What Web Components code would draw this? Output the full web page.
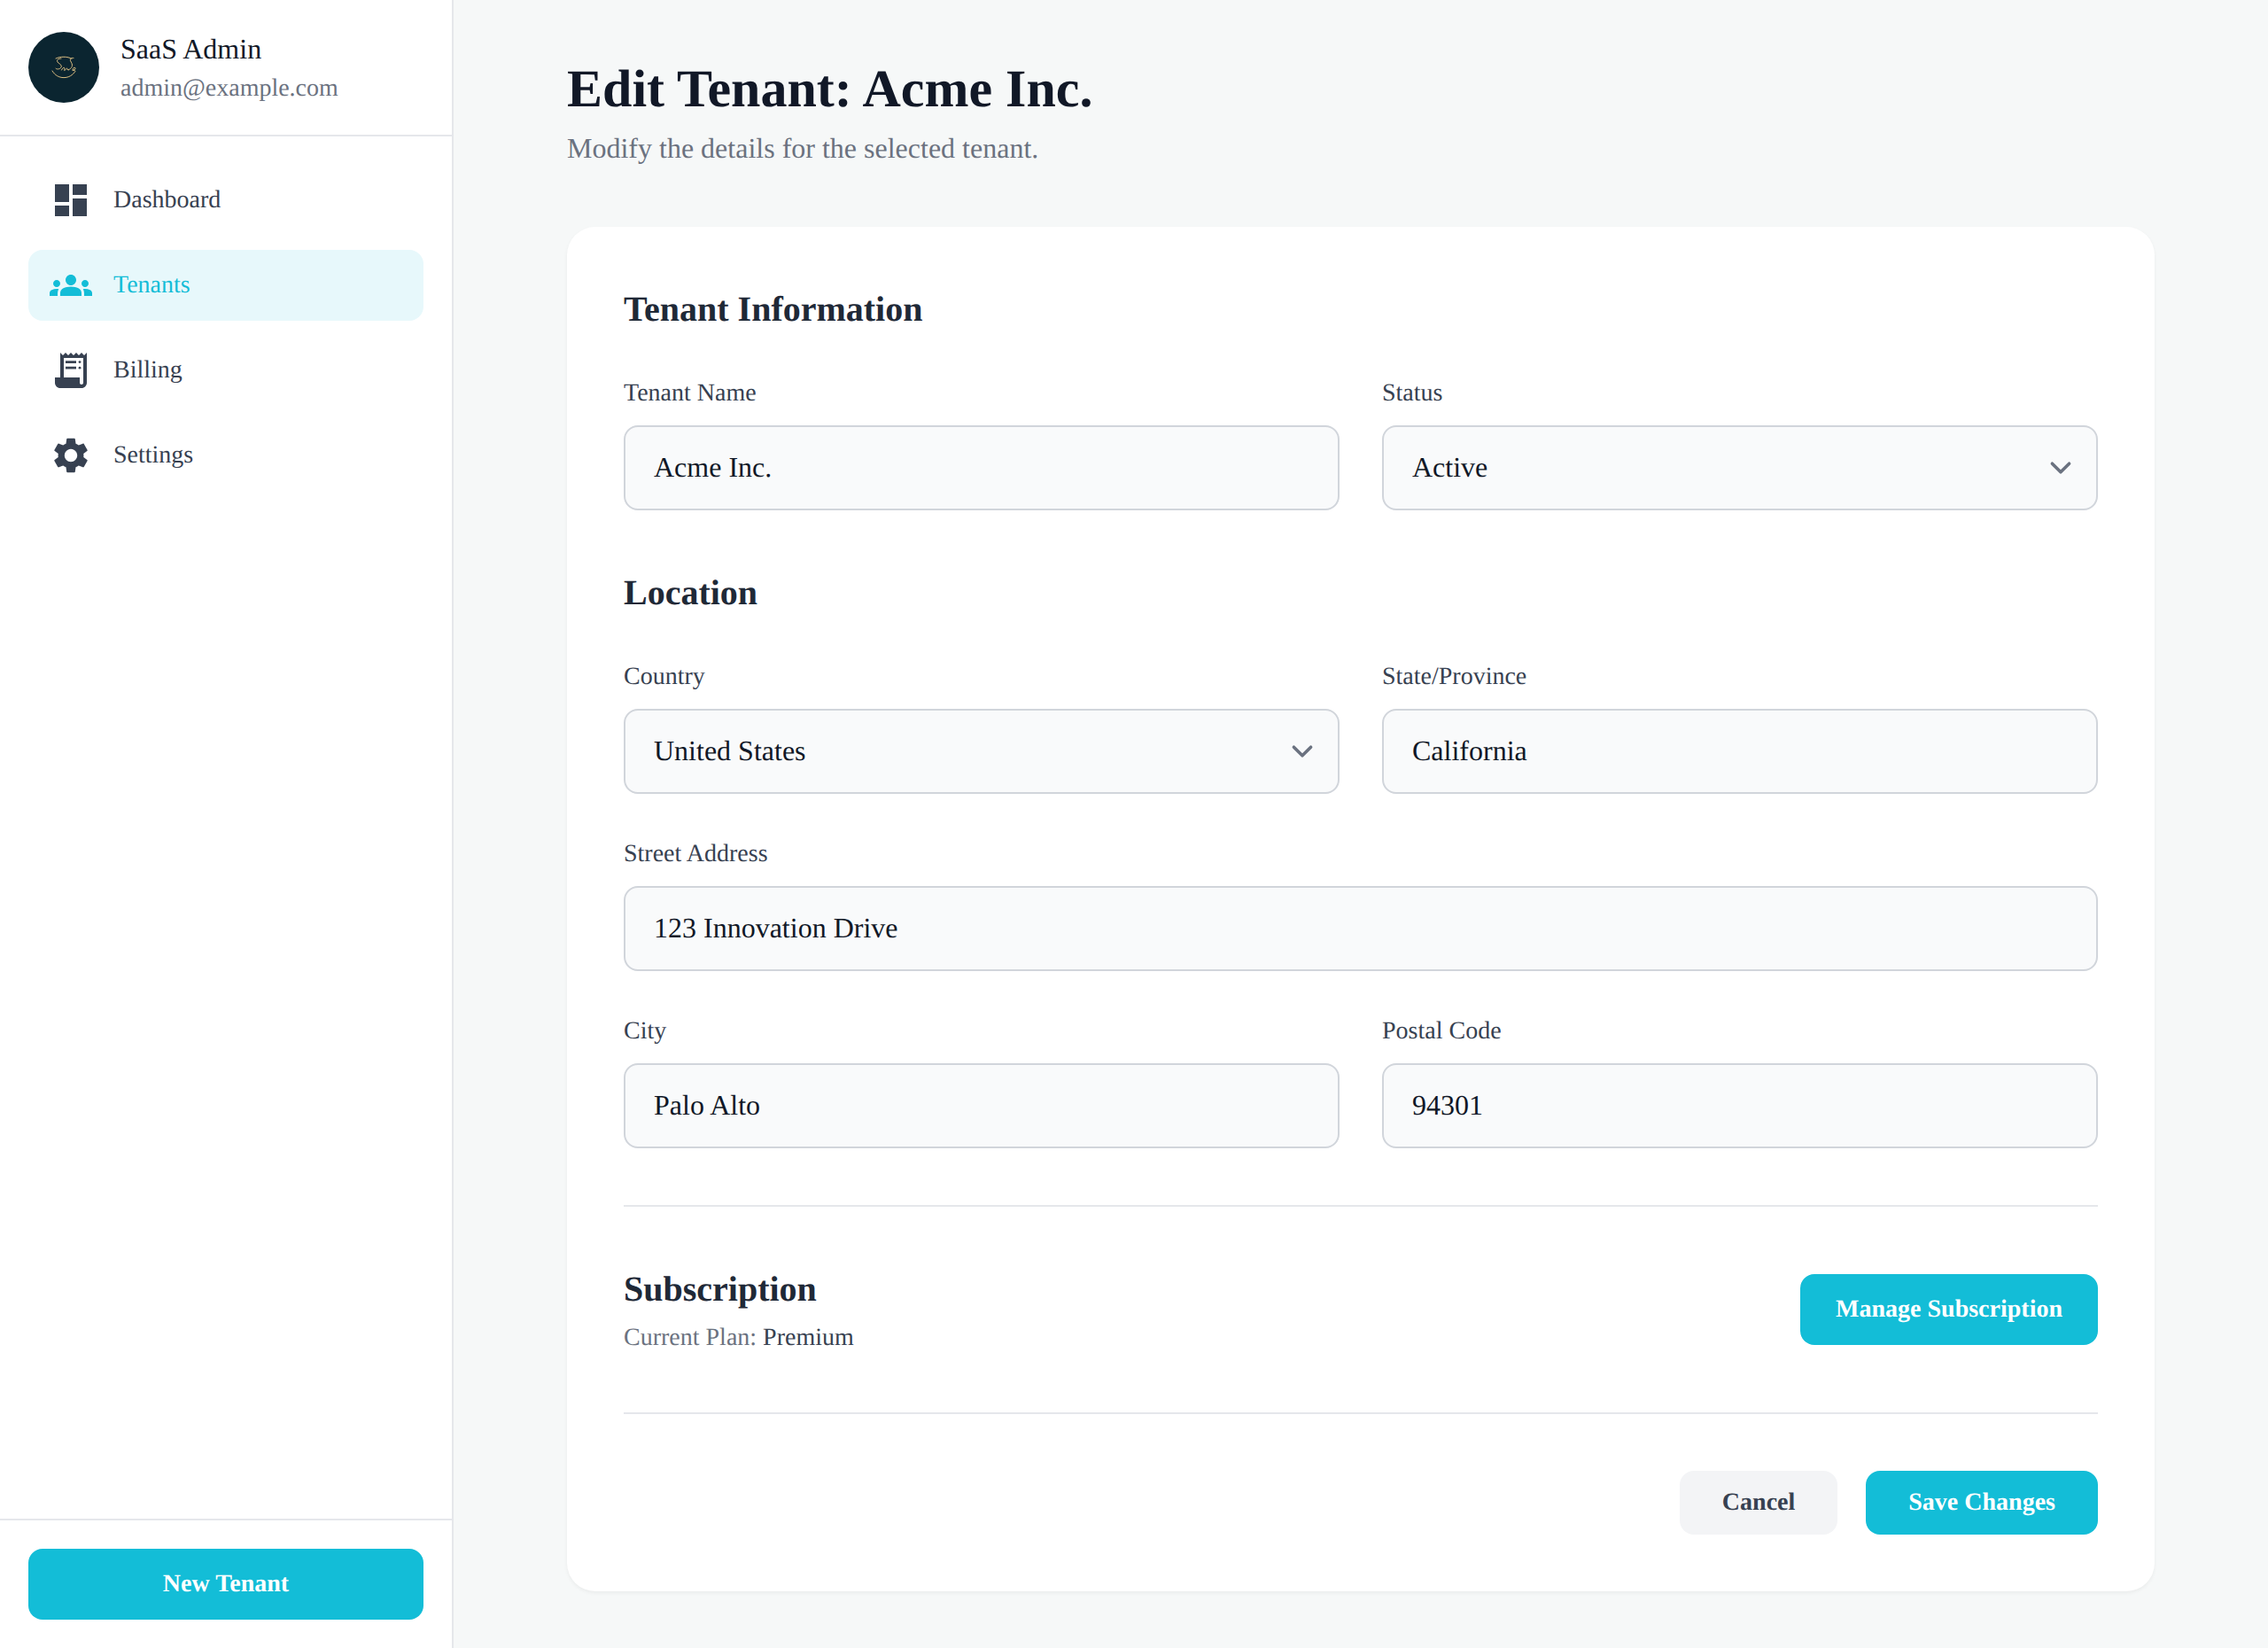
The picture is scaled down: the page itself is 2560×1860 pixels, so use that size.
<!DOCTYPE html>
<html lang="en"><head><meta charset="utf-8"><title>Edit Tenant</title>
<style>
html,body{margin:0;padding:0;height:100%}
body{font-family:"Liberation Serif",serif;background:#f6f8f8;color:#111827;text-rendering:geometricPrecision}
</style></head><body>
<app-shell>
  <app-sidebar slot="side">
    <brand-header name="SaaS Admin" email="admin@example.com"></brand-header>
    <nav-item icon="dashboard">Dashboard</nav-item>
    <nav-item icon="groups" active>Tenants</nav-item>
    <nav-item icon="receipt">Billing</nav-item>
    <nav-item icon="settings">Settings</nav-item>
    <ui-button slot="foot" variant="primary" block>New Tenant</ui-button>
  </app-sidebar>
  <page-head title="Edit Tenant: Acme Inc." sub="Modify the details for the selected tenant."></page-head>
  <form-card>
    <section-title>Tenant Information</section-title>
    <field-grid>
      <form-field label="Tenant Name">Acme Inc.</form-field>
      <form-field label="Status" select>Active</form-field>
    </field-grid>
    <section-title style="margin-top:64px">Location</section-title>
    <field-grid>
      <form-field label="Country" select>United States</form-field>
      <form-field label="State/Province">California</form-field>
      <form-field label="Street Address" wide>123 Innovation Drive</form-field>
      <form-field label="City">Palo Alto</form-field>
      <form-field label="Postal Code">94301</form-field>
    </field-grid>
    <subscription-row plan="Premium"></subscription-row>
    <form-actions>
      <ui-button variant="secondary" short>Cancel</ui-button>
      <ui-button variant="primary" short>Save Changes</ui-button>
    </form-actions>
  </form-card>
</app-shell>
<script>
const ICONS={
dashboard:'<path d="M3 13h8V3H3v10zm0 8h8v-6H3v6zm10 0h8V11h-8v10zm0-18v6h8V3h-8z"/>',
groups:'<path d="M12 12.75c1.63 0 3.07.39 4.24.9 1.08.48 1.76 1.56 1.76 2.73V18H6v-1.61c0-1.18.68-2.26 1.76-2.74 1.17-.52 2.61-.9 4.24-.9zM4 13c1.1 0 2-.9 2-2s-.9-2-2-2-2 .9-2 2 .9 2 2 2zm1.13 1.1c-.37-.06-.74-.1-1.13-.1-.99 0-1.93.21-2.78.58C.48 14.9 0 15.62 0 16.43V18h4.5v-1.61c0-.83.23-1.61.63-2.29zM20 13c1.1 0 2-.9 2-2s-.9-2-2-2-2 .9-2 2 .9 2 2 2zm4 3.43c0-.81-.48-1.53-1.22-1.85-.85-.37-1.79-.58-2.78-.58-.39 0-.76.04-1.13.1.4.68.63 1.46.63 2.29V18H24v-1.57zM12 6c1.66 0 3 1.34 3 3s-1.34 3-3 3-3-1.34-3-3 1.34-3 3-3z"/>',
receipt:'<path d="M19.5 3.5L18 2l-1.5 1.5L15 2l-1.5 1.5L12 2l-1.5 1.5L9 2 7.5 3.5 6 2v14H3v3c0 1.66 1.34 3 3 3h12c1.66 0 3-1.34 3-3V2l-1.5 1.5zM19 19c0 .55-.45 1-1 1s-1-.45-1-1v-3H8V5h11v14z"/><path d="M9 6.600h6v1.400H9zM9 9.900h6v1.400H9z"/><circle cx="17" cy="7.300" r=".7"/><circle cx="17" cy="10.600" r=".7"/>',
settings:'<path d="M19.14 12.94c.04-.3.06-.61.06-.94 0-.32-.02-.64-.07-.94l2.03-1.58c.18-.14.23-.41.12-.61l-1.92-3.32c-.12-.22-.37-.29-.59-.22l-2.39.96c-.5-.38-1.03-.7-1.62-.94l-.36-2.54c-.04-.24-.24-.41-.48-.41h-3.84c-.24 0-.43.17-.47.41l-.36 2.54c-.59.24-1.13.57-1.62.94l-2.39-.96c-.22-.08-.47 0-.59.22L2.74 8.87c-.12.21-.08.47.12.61l2.03 1.58c-.05.3-.09.63-.09.94s.02.64.07.94l-2.03 1.58c-.18.14-.23.41-.12.61l1.92 3.32c.12.22.37.29.59.22l2.39-.96c.5.38 1.03.7 1.62.94l.36 2.54c.05.24.24.41.48.41h3.84c.24 0 .44-.17.47-.41l.36-2.54c.59-.24 1.13-.56 1.62-.94l2.39.96c.22.08.47 0 .59-.22l1.92-3.32c.12-.22.07-.47-.12-.61l-2.01-1.58zM12 15.6c-1.98 0-3.6-1.62-3.6-3.6s1.62-3.6 3.6-3.6 3.6 1.62 3.6 3.6-1.62 3.6-3.6 3.6z"/>'
};
function def(name,html,extra){
  class C extends HTMLElement{
    constructor(){super();this.attachShadow({mode:'open'});if(typeof html!=='function')this.shadowRoot.innerHTML=html;}
    connectedCallback(){
      const r=this.shadowRoot;
      if(typeof html==='function')r.innerHTML=html(this);
      if(extra)extra(this,r);
    }
  }
  customElements.define(name,C);
}
def('app-shell',`<style>
:host{display:flex;min-height:1860px;box-sizing:border-box}
aside{flex:0 0 512px;display:flex}
main{flex:1;min-width:0;padding:64px 128px;box-sizing:border-box}
</style><aside><slot name="side"></slot></aside><main><slot></slot></main>`);
def('app-sidebar',`<style>
:host{display:flex;flex-direction:column;width:512px;box-sizing:border-box;background:#fff;border-right:2px solid #e5e7eb}
nav{flex:1;display:flex;flex-direction:column;gap:16px;padding:32px}
footer{border-top:2px solid #e5e7eb;padding:32px;display:flex;flex-direction:column}
</style><slot name="head"></slot><nav><slot></slot></nav><footer><slot name="foot"></slot></footer>`,(el)=>{
  el.querySelector('brand-header').slot='head';
});
def('brand-header',(h)=>`<style>
:host{display:flex;align-items:center;gap:24px;padding:32px;border-bottom:2px solid #e5e7eb}
svg{width:80px;height:80px;flex:none;display:block}
.t{display:flex;flex-direction:column}
.n{font-size:32px;line-height:46px;padding-bottom:2px;color:#111827}
.e{font-size:28px;line-height:40px;color:#6b7280}
</style>
<svg viewBox="0 0 80 80" aria-hidden="true"><circle cx="40" cy="40" r="40" fill="#0b2530"/>
<g fill="none" stroke="#dcbe82" stroke-width="1" stroke-linecap="round">
<path d="M31 30c5-2.400 13-2.600 18 .3"/><path d="M27 44c3 5 7.500 7.600 13 7.600s10-2.600 13-7.200"/>
<path d="M37 30c-3 0-5.500 1.600-4 4 1.300 2 4.500 2.600 4.300 5-.2 2.600-4.800 4-6.300 2.300"/>
<path d="M37.500 43c1-2.400 3-3.600 3.400-2 .3 1.300-1 2.400-.2 2.600 1 .2 1.600-2.400 2.800-2.400 1 0 .4 2.400 1.800 2"/>
<path d="M51 29.500c-2.600-.8-4.300 1-3.400 3.200.8 2 2.400 3.600 1.700 6-.7 2.400-3.200 4.600-5 3.700"/>
<path d="M50 43.500c1.300-.3 3.400-1.400 3-2.700-.4-1.200-3-.2-3 1.700 0 1.200 1.500 1.200 2.700.5"/>
</g></svg>
<div class="t"><span class="n">${h.getAttribute('name')||''}</span><span class="e">${h.getAttribute('email')||''}</span></div>`);
def('nav-item',(h)=>{const a=h.hasAttribute('active');return `<style>
:host{display:flex;align-items:center;gap:24px;height:80px;padding:0 24px;border-radius:16px;font-size:28px;line-height:40px;color:${a?'#13bdd7':'#374151'};background:${a?'#e7f8fb':'transparent'}}
svg{width:48px;height:48px;flex:none;fill:currentColor;display:block}
</style><svg viewBox="0 0 24 24" aria-hidden="true">${ICONS[h.getAttribute('icon')]||''}</svg><slot></slot>`});
def('ui-button',(h)=>{const p=h.getAttribute('variant')==='primary';const s=h.hasAttribute('short');const b=h.hasAttribute('block');return `<style>
:host{display:${b?'flex':'inline-flex'};align-items:center;justify-content:center;box-sizing:border-box;height:${s?72:80}px;padding:0 ${s?48:40}px;border-radius:16px;font-size:28px;line-height:40px;font-weight:700;background:${p?'#13bdd7':'#f3f4f6'};color:${p?'#fff':'#374151'};cursor:pointer;white-space:nowrap}
</style><slot></slot>`});
def('page-head',(h)=>`<style>
:host{display:block;margin-bottom:64px}
h1{margin:0;font-size:60px;line-height:72px;font-weight:700;color:#111827}
p{margin:8px 0 0;font-size:32px;line-height:46px;padding-bottom:2px;color:#6b7280}
</style><h1>${h.getAttribute('title')}</h1><p>${h.getAttribute('sub')}</p>`);
def('form-card',`<style>
:host{display:block;background:#fff;border-radius:32px;padding:64px;box-shadow:0 2px 4px rgba(0,0,0,.05)}
</style><slot></slot>`);
def('section-title',`<style>
:host{display:block;font-size:40px;line-height:58px;font-weight:700;color:#1f2937;margin-bottom:46px}
</style><slot></slot>`);
def('field-grid',`<style>
:host{display:grid;grid-template-columns:1fr 1fr;column-gap:48px;row-gap:48px}
</style><slot></slot>`);
def('form-field',(h)=>`<style>
:host{display:block;min-width:0;${h.hasAttribute('wide')?'grid-column:1 / -1;':''}}
label{display:block;font-size:28px;line-height:40px;color:#374151;margin-bottom:16px}
.box{position:relative;box-sizing:border-box;height:96px;display:flex;align-items:center;padding:0 32px 2px;background:#f9fafb;border:2px solid #d1d5db;border-radius:16px;font-size:32px;color:#111827}
svg{position:absolute;right:16px;top:22px;width:48px;height:48px}
</style><label>${h.getAttribute('label')}</label><div class="box"><slot></slot>${h.hasAttribute('select')?'<svg viewBox="0 0 20 20" fill="none" aria-hidden="true"><path d="M6 8l4 4 4-4" stroke="#6b7280" stroke-width="1.5" stroke-linecap="round" stroke-linejoin="round"/></svg>':''}</div>`);
def('subscription-row',(h)=>`<style>
:host{display:flex;justify-content:space-between;align-items:center;margin-top:64px;padding:64px 0;border-top:2px solid #e5e7eb;border-bottom:2px solid #e5e7eb}
h3{margin:0;font-size:40px;line-height:58px;font-weight:700;color:#1f2937;margin-bottom:-2px}
p{margin:8px 0 0;font-size:28px;line-height:40px;color:#6b7280}
b{font-weight:400;color:#374151}
</style><div><h3>Subscription</h3><p>Current Plan: <b>${h.getAttribute('plan')}</b></p></div><ui-button variant="primary">Manage Subscription</ui-button>`);
def('form-actions',`<style>
:host{display:flex;justify-content:flex-end;gap:32px;margin-top:64px}
</style><slot></slot>`);
</script>
</body></html>
